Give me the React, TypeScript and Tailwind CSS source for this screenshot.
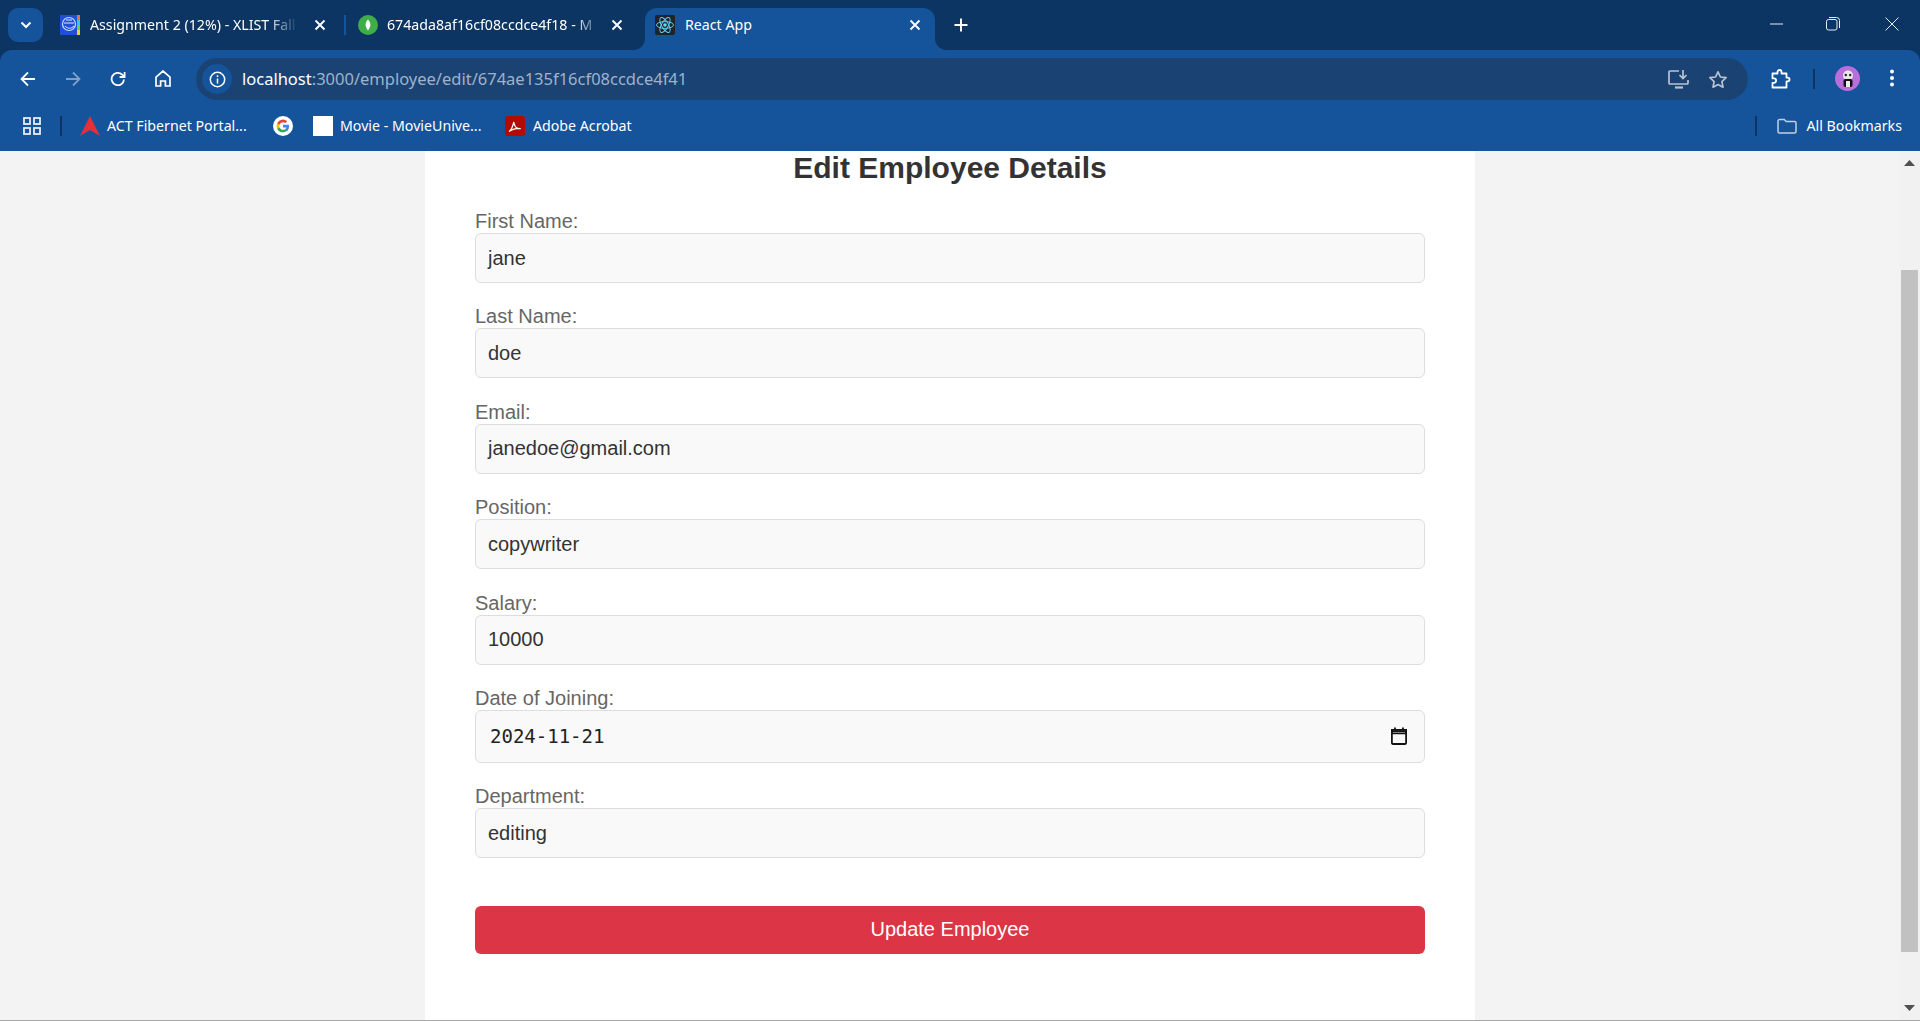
import React from "react";

function X({ className = "" }: { className?: string }) {
  return (
    <svg width="12" height="12" viewBox="0 0 12 12" className={className} fill="none" stroke="currentColor" strokeWidth="1.9">
      <path d="M1.5 1.5 10.5 10.5M10.5 1.5 1.5 10.5" />
    </svg>
  );
}

function CollegeFavicon() {
  return (
    <svg width="20" height="20" viewBox="0 0 20 20" className="shrink-0">
      <rect width="20" height="20" fill="#1f4fd8" />
      <rect x="17" width="3" height="5" fill="#e8743b" />
      <rect x="17" y="5" width="3" height="5" fill="#3cc4d8" />
      <rect x="17" y="10" width="3" height="5" fill="#6fd04a" />
      <rect x="17" y="15" width="3" height="5" fill="#e8d23b" />
      <circle cx="9" cy="9" r="6.5" fill="none" stroke="#c9d8ff" strokeWidth="1.2" />
      <path d="M4 8h10M5 11c3 3 6 3 9 0M6 5h6" stroke="#e2eaff" strokeWidth="1" fill="none" />
    </svg>
  );
}

function MongoFavicon() {
  return (
    <svg width="20" height="20" viewBox="0 0 20 20" className="shrink-0">
      <circle cx="10" cy="10" r="10" fill="#3fae49" />
      <path d="M10 4.5c2 2 2.4 3.800 2.400 5.400 0 2-1.200 3.600-2.400 5.600-1.200-2-2.400-3.600-2.400-5.600 0-1.600.4-3.400 2.400-5.400Z" fill="#fff" />
    </svg>
  );
}

function ReactFavicon() {
  return (
    <svg width="20" height="20" viewBox="0 0 20 20" className="shrink-0">
      <rect width="20" height="20" rx="2" fill="#20232a" />
      <circle cx="10" cy="10" r="1.8" fill="#61dafb" />
      <g fill="none" stroke="#61dafb" strokeWidth="0.9">
        <ellipse cx="10" cy="10" rx="8.5" ry="3.4" />
        <ellipse cx="10" cy="10" rx="8.5" ry="3.4" transform="rotate(60 10 10)" />
        <ellipse cx="10" cy="10" rx="8.5" ry="3.4" transform="rotate(120 10 10)" />
      </g>
    </svg>
  );
}

function TabStrip() {
  return (
    <div className="h-[50px] shrink-0 bg-[#0c3563] flex items-start text-white">
      <div className="ml-2 mt-2 w-[35px] h-[34px] rounded-[10px] bg-[#15539a] flex items-center justify-center shrink-0">
        <svg width="12" height="8" viewBox="0 0 12 8" fill="none" stroke="white" strokeWidth="2">
          <path d="M1.5 1.500 6 6l4.500-4.500" />
        </svg>
      </div>
      <div className="ml-[17px] w-[284px] h-[50px] flex items-center shrink-0">
        <CollegeFavicon />
        <span className="ml-[10px] w-[208px] text-[14.2px] whitespace-nowrap [mask-image:linear-gradient(to_right,black_85%,transparent)]">
          Assignment 2 (12%) - XLIST Fall
        </span>
        <X className="ml-[16px] shrink-0" />
      </div>
      <div className="w-[2px] h-[20px] mt-[15px] bg-[#15539a] shrink-0" />
      <div className="ml-[12px] w-[287px] h-[50px] flex items-center shrink-0">
        <MongoFavicon />
        <span className="ml-[9px] w-[214px] text-[14.2px] whitespace-nowrap [mask-image:linear-gradient(to_right,black_88%,transparent)]">
          674ada8af16cf08ccdce4f18 - M
        </span>
        <X className="ml-[10px] shrink-0" />
      </div>
      <div className="relative mt-2 w-[290px] h-[42px] bg-[#15539a] rounded-t-[12px] flex items-center pl-[10px] pb-[8px] shrink-0">
        <svg width="12" height="12" viewBox="0 0 12 12" className="absolute -left-[12px] bottom-0">
          <path d="M12 0v12H0C7 12 12 7 12 0Z" fill="#15539a" />
        </svg>
        <svg width="12" height="12" viewBox="0 0 12 12" className="absolute -right-[12px] bottom-0">
          <path d="M0 0v12h12C5 12 0 7 0 0Z" fill="#15539a" />
        </svg>
        <ReactFavicon />
        <span className="ml-[10px] text-[14.2px] whitespace-nowrap">React App</span>
        <X className="ml-auto mr-[14px]" />
      </div>
      <svg width="14" height="14" viewBox="0 0 14 14" className="ml-[19px] mt-[18px] shrink-0" fill="none" stroke="white" strokeWidth="1.9">
        <path d="M7 .5v13M.5 7h13" />
      </svg>
      <div className="ml-auto flex items-center h-[48px] text-[#e6edf5]">
        <svg width="13" height="2" viewBox="0 0 13 2" className="mr-[43px]"><path d="M0 1h13" stroke="currentColor" /></svg>
        <svg width="14" height="14" viewBox="0 0 14 14" className="mr-[45px]" fill="none" stroke="currentColor">
          <rect x="0.5" y="2.5" width="10.5" height="10.5" rx="2" />
          <path d="M3 .5h7.500a3 3 0 0 1 3 3V11" />
        </svg>
        <svg width="14" height="14" viewBox="0 0 14 14" className="mr-[21px]" fill="none" stroke="currentColor">
          <path d="M.5.5l13 13M13.500.5l-13 13" />
        </svg>
      </div>
    </div>
  );
}

function Toolbar() {
  return (
    <div className="h-[50px] shrink-0 bg-[#15539a] rounded-t-[12px] flex items-start text-white">
      <svg width="16" height="16" viewBox="0 0 16 16" className="ml-[20px] mt-[21px] shrink-0" fill="none" stroke="white" strokeWidth="1.8">
        <path d="M15 8H1.500M8 1.500 1.500 8 8 14.500" />
      </svg>
      <svg width="16" height="16" viewBox="0 0 16 16" className="ml-[29px] mt-[21px] shrink-0" fill="none" stroke="#7f9fc6" strokeWidth="1.8">
        <path d="M1 8h13.500M8 1.500 14.500 8 8 14.500" />
      </svg>
      <svg width="16" height="16" viewBox="0 0 16 16" className="ml-[29px] mt-[21px] shrink-0" fill="none" stroke="white" strokeWidth="1.8">
        <path d="M14 8.500A6.200 6.200 0 1 1 12.200 3.600L14.300 5.600" />
        <path d="M14.600 1v5h-5" />
      </svg>
      <svg width="16" height="17" viewBox="0 0 16 17" className="ml-[29px] mt-[20px] shrink-0" fill="none" stroke="white" strokeWidth="1.7">
        <path d="M1 7.200 8 1l7 6.200V16h-4.600v-5H5.600v5H1V7.200Z" />
      </svg>
      <div className="ml-[25px] mt-[8px] h-[42px] w-[1552px] rounded-full bg-[#1a4374] flex items-center pl-[6px] shrink-0">
        <div className="w-[30px] h-[30px] rounded-full bg-[#15539a] flex items-center justify-center shrink-0">
          <svg width="17" height="17" viewBox="0 0 17 17" fill="none" stroke="white" strokeWidth="1.5">
            <circle cx="8.5" cy="8.5" r="7.2" />
            <path d="M8.500 7.500v5M8.500 4.200v1.800" />
          </svg>
        </div>
        <span className="ml-[10px] text-[16.5px] text-white whitespace-nowrap">
          localhost<span className="text-[#9fb2c9]">:3000/employee/edit/674ae135f16cf08ccdce4f41</span>
        </span>
        <svg width="22" height="20" viewBox="0 0 22 20" className="ml-auto shrink-0" fill="none" stroke="#b9c4d1" strokeWidth="1.7">
          <path d="M11 2H2a1 1 0 0 0-1 1v11a1 1 0 0 0 1 1h17a1 1 0 0 0 1-1v-3" />
          <path d="M7 18.500h8" strokeWidth="2.2" />
          <path d="M15 1v8M11.500 6l3.500 3.500L18.500 6" />
        </svg>
        <svg width="20" height="19" viewBox="0 0 20 19" className="ml-[18px] mr-[20px] shrink-0" fill="none" stroke="#b9c4d1" strokeWidth="1.7" strokeLinejoin="round">
          <path d="M10 1.800l2.400 5.200 5.700.7-4.200 3.900 1.100 5.600L10 14.500l-5 2.700 1.100-5.600L1.900 7.700 7.600 7Z" />
        </svg>
      </div>
      <svg width="20" height="20" viewBox="0 0 20 20" className="ml-[23px] mt-[19px] shrink-0" fill="none" stroke="white" strokeWidth="1.8" strokeLinejoin="round">
        <path d="M1.500 4.500h5V3a2 2 0 0 1 4 0v1.500h5v4.200h1.200a1.800 1.800 0 0 1 0 3.600h-1.200v6.200h-14v-4.700h1.400a2.200 2.200 0 0 0 0-4.400H1.500V4.500Z" />
      </svg>
      <div className="ml-[22px] mt-[19px] w-[2px] h-[20px] bg-[#0c3563] shrink-0" />
      <div className="ml-[20px] mt-[16px] w-[25px] h-[25px] rounded-full bg-[#b96fdb] flex items-center justify-center shrink-0">
        <svg width="14" height="18" viewBox="0 0 14 18">
          <circle cx="7" cy="5.500" r="5" fill="#e8e8e8" />
          <circle cx="4.800" cy="5" r="1.200" fill="#222" />
          <circle cx="9.200" cy="5" r="1.200" fill="#222" />
          <rect x="2.500" y="9" width="9" height="8" rx="2" fill="#111" />
          <rect x="5" y="11" width="4" height="6" fill="#eee" />
        </svg>
      </div>
      <svg width="6" height="18" viewBox="0 0 6 18" className="ml-[29px] mt-[19px] shrink-0" fill="white">
        <circle cx="3" cy="2.500" r="2" />
        <circle cx="3" cy="9" r="2" />
        <circle cx="3" cy="15.500" r="2" />
      </svg>
    </div>
  );
}

function BookmarksBar() {
  return (
    <div className="h-[51px] shrink-0 bg-[#15539a] flex items-center text-white text-[14.2px]">
      <svg width="18" height="18" viewBox="0 0 18 18" className="ml-[23px] shrink-0" fill="none" stroke="#e6edf5" strokeWidth="1.8">
        <rect x="1" y="1" width="6" height="6" />
        <rect x="11" y="1" width="6" height="6" />
        <rect x="1" y="11" width="6" height="6" />
        <rect x="11" y="11" width="6" height="6" />
      </svg>
      <div className="ml-[19px] w-[2px] h-[20px] bg-[#0c3563] shrink-0" />
      <svg width="20" height="20" viewBox="0 0 20 20" className="ml-[18px] shrink-0">
        <path d="M10 0 20 20l-10-6L0 20Z" fill="#e4303b" />
      </svg>
      <span className="ml-[7px] whitespace-nowrap w-[166px]">ACT Fibernet Portal...</span>
      <svg width="20" height="20" viewBox="0 0 20 20" className="shrink-0">
        <circle cx="10" cy="10" r="10" fill="#fff" />
        <path d="M16 10.200c0-.5 0-1-.1-1.400H10v2.700h3.400a3 3 0 0 1-1.300 1.900v1.600h2.100c1.200-1.100 1.800-2.800 1.800-4.800Z" fill="#4285f4" />
        <path d="M10 16.300c1.700 0 3.100-.6 4.200-1.500l-2.100-1.600c-.6.400-1.300.6-2.100.6-1.600 0-3-1.100-3.500-2.600H4.300v1.700A6.300 6.300 0 0 0 10 16.300Z" fill="#34a853" />
        <path d="M6.500 11.200a3.800 3.800 0 0 1 0-2.400V7.100H4.300a6.300 6.300 0 0 0 0 5.800Z" fill="#fbbc05" />
        <path d="M10 6.200c.9 0 1.800.3 2.400.9l1.800-1.800A6.300 6.300 0 0 0 4.300 7.100l2.200 1.700C7 7.300 8.400 6.200 10 6.200Z" fill="#ea4335" />
      </svg>
      <div className="ml-[20px] w-[20px] h-[20px] bg-white shrink-0" />
      <span className="ml-[7px] whitespace-nowrap w-[165px]">Movie - MovieUnive...</span>
      <svg width="20" height="20" viewBox="0 0 20 20" className="shrink-0">
        <rect width="20" height="20" rx="3" fill="#b30b00" />
        <path d="M4 15.500c2-1 3.500-4 4.800-9.500.5 3 2.500 6 4 6.500 1 .3 2.500.1 3 .3-2-.8-7-.5-11.800 2.700Z" fill="none" stroke="#fff" strokeWidth="1.2" />
      </svg>
      <span className="ml-[8px] whitespace-nowrap">Adobe Acrobat</span>
      <div className="ml-auto w-[2px] h-[20px] bg-[#0c3563] shrink-0" />
      <svg width="20" height="16" viewBox="0 0 20 16" className="ml-[20px] shrink-0" fill="none" stroke="#c6cfdb" strokeWidth="1.5">
        <path d="M1 3a1.500 1.500 0 0 1 1.500-1.500h4.700l2 2h8.300A1.500 1.500 0 0 1 19 5v8.500a1.500 1.500 0 0 1-1.500 1.500h-15A1.500 1.500 0 0 1 1 13.500Z" />
      </svg>
      <span className="ml-[10px] mr-[18px] whitespace-nowrap">All Bookmarks</span>
    </div>
  );
}

function Field({ label, value }: { label: string; value: string }) {
  return (
    <div className="mb-[24.4px]">
      <div className="h-[21px] leading-[19px] text-[20px] text-[#666666]">{label}</div>
      <div className="h-[50px] border border-[#dddddd] rounded-[6px] bg-[#f9f9f9] px-[12px] pb-[1px] flex items-center text-[20px] text-[#333333]">
        {value}
      </div>
    </div>
  );
}

function Form() {
  return (
    <div className="w-[1050px] mx-auto bg-white px-[50px] h-full font-['Liberation_Sans',Arial,sans-serif]">
      <h1 className="h-[33px] leading-[34px] mb-[28px] text-center text-[30px] font-bold text-[#333333]">Edit Employee Details</h1>
      <Field label="First Name:" value="jane" />
      <Field label="Last Name:" value="doe" />
      <Field label="Email:" value="janedoe@gmail.com" />
      <Field label="Position:" value="copywriter" />
      <Field label="Salary:" value="10000" />
      <div className="mb-[24.4px]">
        <div className="h-[21px] leading-[19px] text-[20px] text-[#666666]">Date of Joining:</div>
        <div className="h-[53px] border border-[#dddddd] rounded-[6px] bg-[#f9f9f9] pl-[14px] pr-[17px] flex items-center justify-between text-[19px] text-[#222222] font-['DejaVu_Sans_Mono',monospace]">
          <span>2024-11-21</span>
          <svg width="16" height="18" viewBox="0 0 18 20" fill="none">
            <path d="M1 4.500h16V18a1 1 0 0 1-1 1H2a1 1 0 0 1-1-1Z" stroke="#111" strokeWidth="2" />
            <path d="M1 3h16v4H1ZM4.500 0.500v3M13.500 0.500v3" stroke="#111" strokeWidth="2" />
          </svg>
        </div>
      </div>
      <Field label="Department:" value="editing" />
      <div className="mt-[47.6px] h-[48px] rounded-[6px] bg-[#dc3545] text-white text-[20px] pb-[1px] flex items-center justify-center">Update Employee</div>
    </div>
  );
}

function Scrollbar() {
  return (
    <div className="w-[20px] shrink-0 bg-[#f1f1f1] flex flex-col items-start">
      <svg width="11" height="6" viewBox="0 0 11 6" className="ml-[4px] mt-[9px] mb-[104px] shrink-0"><path d="M5.500 0 11 6H0Z" fill="#505050" /></svg>
      <div className="w-[17px] ml-[1px] h-[682px] bg-[#c1c1c1] shrink-0" />
      <svg width="11" height="6" viewBox="0 0 11 6" className="ml-[4px] mt-auto mb-[9px] shrink-0"><path d="M5.500 6 11 0H0Z" fill="#505050" /></svg>
    </div>
  );
}

export default function App() {
  return (
    <div className="h-[1021px] w-[1920px] overflow-hidden flex flex-col bg-[#0c3563]">
      <div className="font-['Noto_Sans','Open_Sans',sans-serif] flex flex-col shrink-0">
        <TabStrip />
        <Toolbar />
        <BookmarksBar />
      </div>
      <div className="flex-1 min-h-0 flex bg-[#f3f3f3] border-b border-[#a6a6a6]">
        <div className="flex-1 min-w-0">
          <Form />
        </div>
        <Scrollbar />
      </div>
    </div>
  );
}
